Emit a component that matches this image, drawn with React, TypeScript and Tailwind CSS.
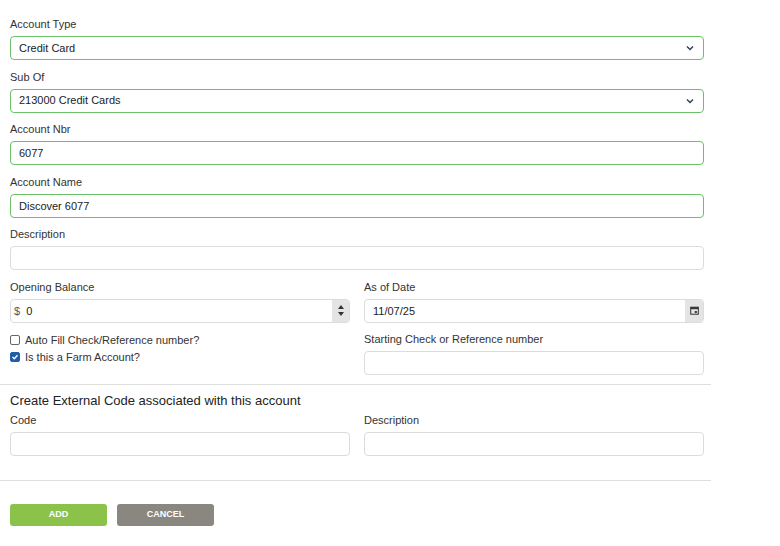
import React from "react";

const font = { fontFamily: '"Liberation Sans", Arial, sans-serif' };

function Chevron() {
  return (
    <svg width="10" height="10" viewBox="0 0 10 10" className="text-gray-700">
      <path d="M2 3.5 L5 6.5 L8 3.5" fill="none" stroke="currentColor" strokeWidth="1.5" />
    </svg>
  );
}

function Field({ label, value, select, green, className = "" }: { label: string; value?: string; select?: boolean; green?: boolean; className?: string }) {
  return (
    <div className={"flex flex-col gap-1 " + className}>
      <label className="h-4 leading-4 text-[11px] text-[#333]">{label}</label>
      <div
        className={
          "h-6 rounded-[4px] border flex items-center justify-between px-2 text-[11px] text-[#222] " +
          (green ? "border-[#6cc06a]" : "border-[#dcdcdc]")
        }
      >
        <span>{value}</span>
        {select && <Chevron />}
      </div>
    </div>
  );
}

function Check({ checked, label }: { checked?: boolean; label: string }) {
  return (
    <div className="flex items-center gap-[5px] h-[17px] text-[11px] text-[#333]">
      <span
        className={
          "w-[10px] h-[10px] rounded-[2px] border flex items-center justify-center " +
          (checked ? "bg-[#1f5fa8] border-[#1f5fa8]" : "border-[#666] bg-white")
        }
      >
        {checked && (
          <svg width="8" height="8" viewBox="0 0 8 8">
            <path d="M1.5 4 L3.3 5.8 L6.5 2.2" fill="none" stroke="white" strokeWidth="1.4" />
          </svg>
        )}
      </span>
      {label}
    </div>
  );
}

export default function App() {
  return (
    <div className="w-[780px] h-[546px] bg-white" style={font}>
      <div className="w-[714px]">
        <div className="px-[10px] pt-4 flex flex-col gap-[8.6px]">
          <Field label="Account Type" value="Credit Card" select green />
          <Field label="Sub Of" value="213000 Credit Cards" select green />
          <Field label="Account Nbr" value="6077" green />
          <Field label="Account Name" value="Discover 6077" green />
          <Field label="Description" />
          <div className="grid grid-cols-2 gap-[14px]">
            <div className="flex flex-col gap-1">
              <label className="h-4 leading-4 text-[11px] text-[#333]">Opening Balance</label>
              <div className="h-6 rounded-[4px] border border-[#dcdcdc] flex items-center text-[11px] text-[#222] overflow-hidden">
                <span className="pl-[3px] pr-[6px] text-[#555]">$</span>
                <span className="flex-1">0</span>
                <div className="w-[17px] h-full bg-[#e4e4e4] flex flex-col items-center justify-center gap-[3px]">
                  <svg width="6" height="4" viewBox="0 0 6 4"><path d="M0 4 L3 0 L6 4Z" fill="#333" /></svg>
                  <svg width="6" height="4" viewBox="0 0 6 4"><path d="M0 0 L3 4 L6 0Z" fill="#333" /></svg>
                </div>
              </div>
              <div className="mt-[5px] flex flex-col">
                <Check label="Auto Fill Check/Reference number?" />
                <Check checked label="Is this a Farm Account?" />
              </div>
            </div>
            <div className="flex flex-col gap-1">
              <label className="h-4 leading-4 text-[11px] text-[#333]">As of Date</label>
              <div className="h-6 rounded-[4px] border border-[#dcdcdc] flex items-center text-[11px] text-[#222] overflow-hidden">
                <span className="flex-1 pl-2">11/07/25</span>
                <div className="w-[18px] h-full bg-[#e4e4e4] flex items-center justify-center">
                  <svg width="9" height="9" viewBox="0 0 9 9">
                    <rect x="0.7" y="1.2" width="7.6" height="7" fill="none" stroke="#333" strokeWidth="1" />
                    <rect x="0.7" y="1.2" width="7.6" height="2" fill="#333" />
                    <rect x="4.8" y="5" width="2" height="2" fill="#333" />
                  </svg>
                </div>
              </div>
              <div className="mt-[4px]">
                <Field label="Starting Check or Reference number" />
              </div>
            </div>
          </div>
        </div>
        <div className="mt-[9px] w-[711px] border-t border-[#dedede]" />
        <div className="px-[10px] pt-[8px]">
          <h3 className="text-[13px] leading-4 text-[#222]">Create External Code associated with this account</h3>
          <div className="grid grid-cols-2 gap-[14px] mt-[3px]">
            <Field label="Code" />
            <Field label="Description" />
          </div>
        </div>
        <div className="mt-[24px] w-[711px] border-t border-[#dedede]" />
        <div className="px-[10px] pt-[23px] flex gap-[10px]">
          <button className="w-[97px] h-[22px] rounded-[3px] bg-[#8bc34a] text-white text-[9px] font-bold">ADD</button>
          <button className="w-[97px] h-[22px] rounded-[3px] bg-[#8a8780] text-white text-[9px] font-bold">CANCEL</button>
        </div>
      </div>
    </div>
  );
}
